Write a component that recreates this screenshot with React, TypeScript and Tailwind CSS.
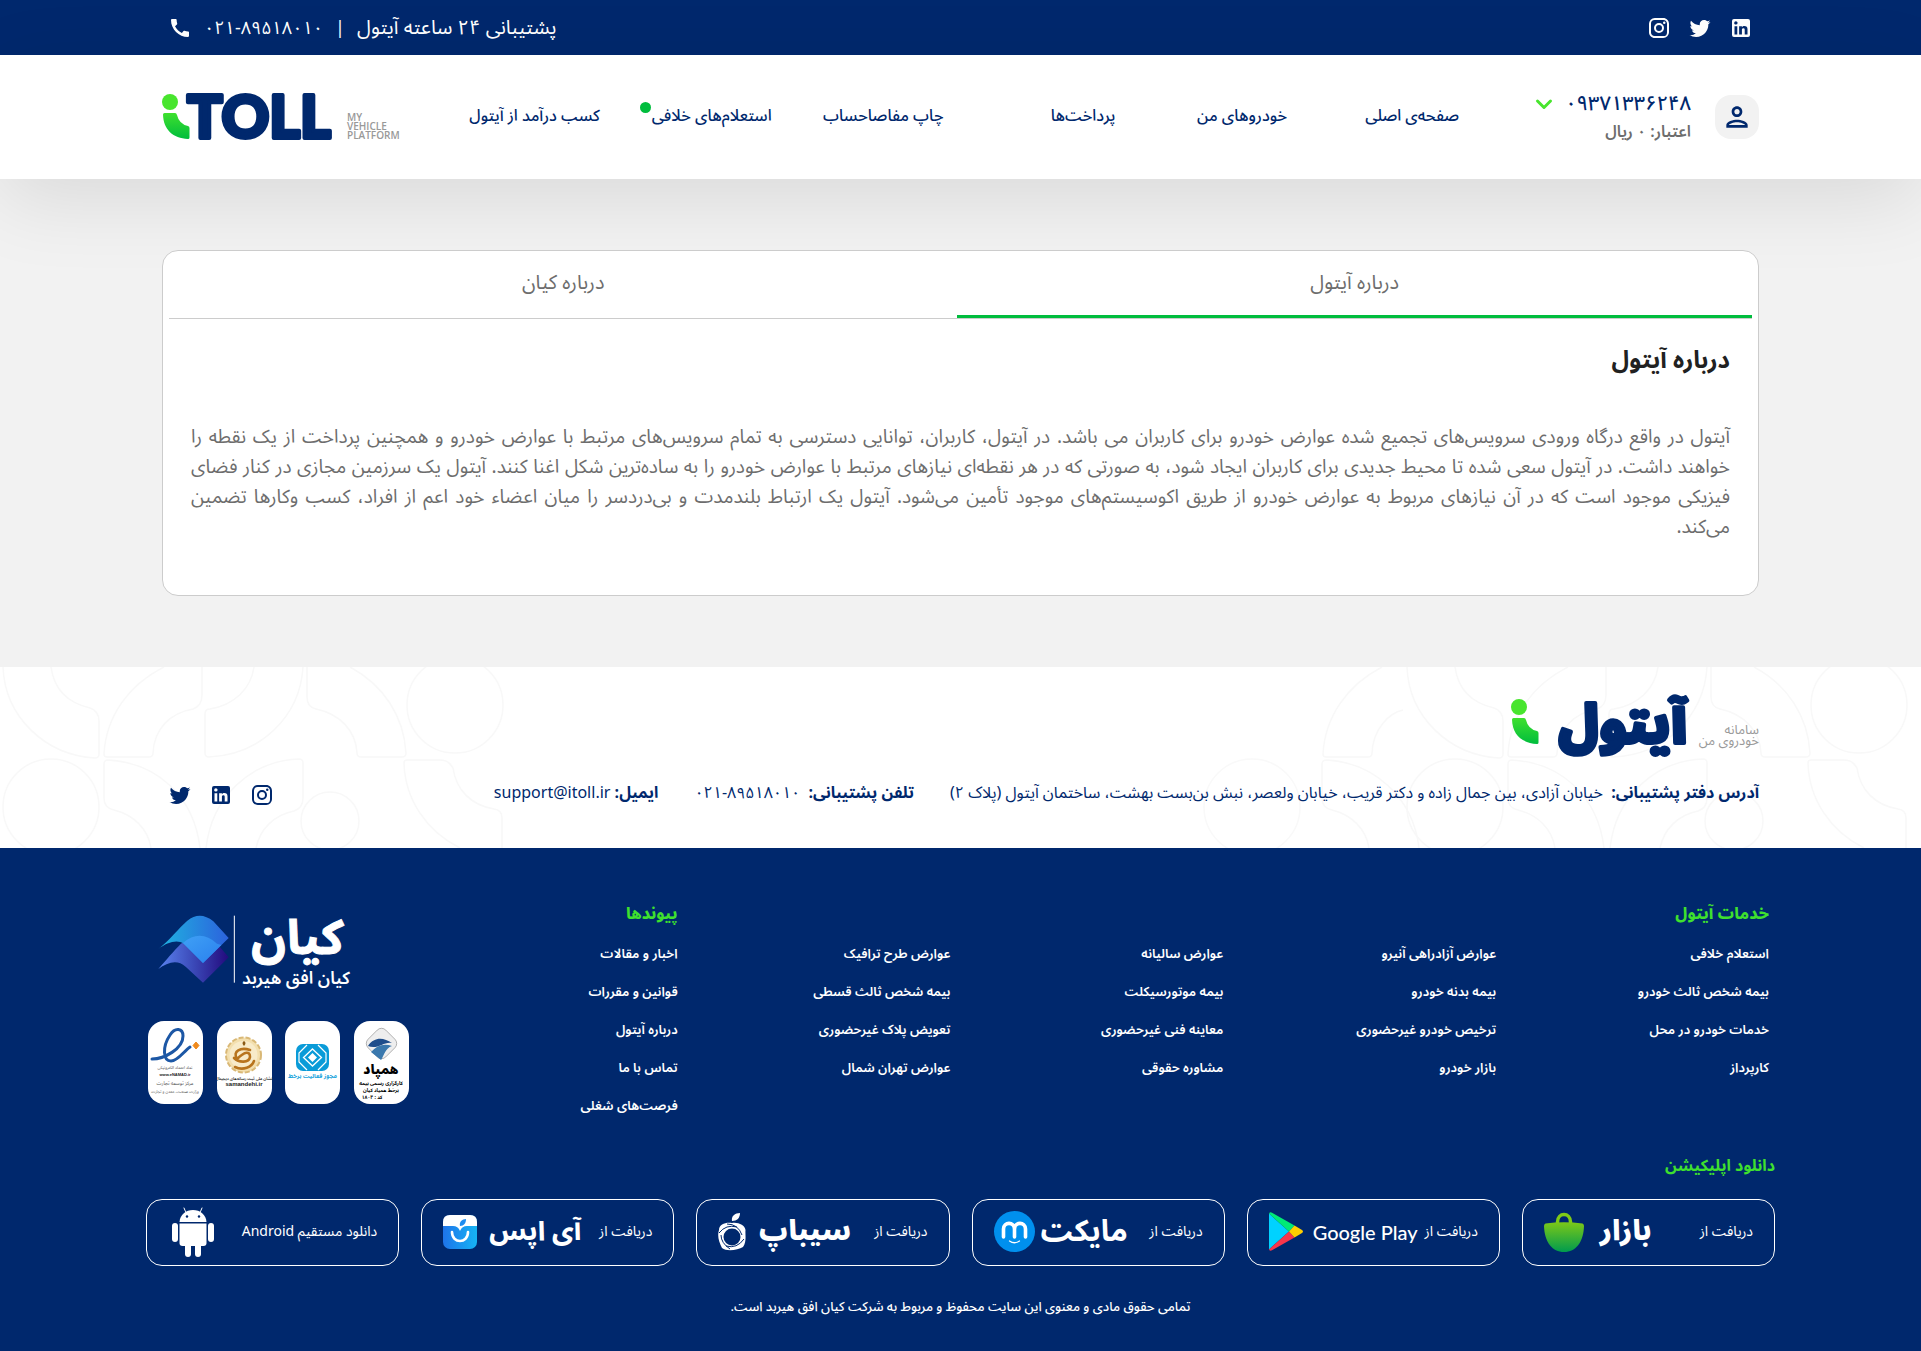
import { useState } from "react";
import type { ReactNode } from "react";
import { MdCall, MdOutlinePerson } from "react-icons/md";

type IconProps = { className?: string };

const Instagram = ({ className }: IconProps) => (
  <svg viewBox="0 0 24 24" fill="currentColor" className={className} aria-hidden="true">
    <path d="M7.8 2h8.4C19.4 2 22 4.6 22 7.8v8.4a5.8 5.8 0 0 1-5.8 5.8H7.8C4.6 22 2 19.4 2 16.2V7.8A5.8 5.8 0 0 1 7.8 2m-.2 2A3.6 3.6 0 0 0 4 7.6v8.8C4 18.39 5.61 20 7.6 20h8.8a3.6 3.6 0 0 0 3.6-3.6V7.6C20 5.61 18.39 4 16.4 4H7.6m9.65 1.5a1.25 1.25 0 0 1 1.25 1.25A1.25 1.25 0 0 1 17.25 8 1.25 1.25 0 0 1 16 6.75a1.25 1.25 0 0 1 1.25-1.25M12 7a5 5 0 0 1 5 5 5 5 0 0 1-5 5 5 5 0 0 1-5-5 5 5 0 0 1 5-5m0 2a3 3 0 0 0-3 3 3 3 0 0 0 3 3 3 3 0 0 0 3-3 3 3 0 0 0-3-3z" />
  </svg>
);

const Twitter = ({ className }: IconProps) => (
  <svg viewBox="0 0 24 24" fill="currentColor" className={className} aria-hidden="true">
    <path d="M22.46 6c-.77.35-1.6.58-2.46.69.88-.53 1.56-1.37 1.88-2.38-.83.5-1.75.85-2.72 1.05C18.37 4.5 17.26 4 16 4c-2.35 0-4.27 1.92-4.27 4.29 0 .34.04.67.11.98C8.28 9.09 5.11 7.38 3 4.79c-.37.63-.58 1.37-.58 2.15 0 1.49.75 2.81 1.91 3.56-.71 0-1.37-.2-1.95-.5v.03c0 2.08 1.48 3.82 3.44 4.21a4.22 4.22 0 0 1-1.93.07 4.28 4.28 0 0 0 4 2.98 8.521 8.521 0 0 1-5.33 1.84c-.34 0-.68-.02-1.02-.06C3.44 20.29 5.7 21 8.12 21 16 21 20.33 14.46 20.33 8.79c0-.19 0-.37-.01-.56.84-.6 1.56-1.36 2.14-2.23z" />
  </svg>
);

const LinkedIn = ({ className }: IconProps) => (
  <svg viewBox="0 0 24 24" fill="currentColor" className={className} aria-hidden="true">
    <path d="M19 3a2 2 0 0 1 2 2v14a2 2 0 0 1-2 2H5a2 2 0 0 1-2-2V5a2 2 0 0 1 2-2h14m-.5 15.5v-5.3a3.26 3.26 0 0 0-3.26-3.26c-.85 0-1.84.52-2.32 1.3v-1.11h-2.79v8.37h2.79v-4.93c0-.77.62-1.4 1.39-1.4a1.4 1.4 0 0 1 1.4 1.4v4.93h2.79M6.88 8.56a1.68 1.68 0 0 0 1.68-1.68c0-.93-.75-1.69-1.68-1.69a1.69 1.69 0 0 0-1.69 1.69c0 .93.76 1.68 1.69 1.68m1.39 9.94v-8.37H5.5v8.37h2.77z" />
  </svg>
);

const BrandMark = ({ id }: { id: string }) => (
  <>
    <defs>
      <linearGradient id={id} x1="0" y1="0" x2="0" y2="1">
        <stop offset="0" stopColor="#3fe02e" />
        <stop offset="1" stopColor="#00bd3d" />
      </linearGradient>
    </defs>
    <circle cx="8" cy="8" r="8" fill="#48e52e" />
    <path d="M2.500 19H13Q14.500 19 15 21Q17 30 26 32Q27.500 32.500 27.500 34V43.500Q27.500 45 26 45C11 44 1.500 36 1 20.500Q1 19 2.500 19Z" fill={`url(#${id})`} />
  </>
);

const HeaderLogo = () => (
  <a href="#home" aria-label="iTOLL" className="flex shrink-0 items-end" dir="ltr">
    <svg viewBox="0 0 173 46" className="h-[46px] w-[173px] overflow-visible" aria-hidden="true">
      <BrandMark id="mark-header" />
      <text x="25" y="44" fill="#00286d" stroke="#00286d" strokeWidth="4" strokeLinejoin="round" className="font-['Lato'] text-[59px] font-black">
        TOLL
      </text>
    </svg>
    <span className="ms-3 flex flex-col font-['Open_Sans'] text-[10px] leading-[9px] font-semibold text-[#999]">
      <span>MY</span>
      <span>VEHICLE</span>
      <span>PLATFORM</span>
    </span>
  </a>
);

const FooterLogo = () => (
  <a href="#home" aria-label="آیتول" className="flex w-fit items-end">
    <span className="mb-2 flex flex-col text-[13px] leading-[11px] text-[#999]">
      <span>سامانه</span>
      <span>خودروی من</span>
    </span>
    <svg viewBox="0 0 188 56" className="h-14 w-[188px] overflow-visible" aria-hidden="true">
      <BrandMark id="mark-footer" />
      <text x="112" y="44" textAnchor="middle" fill="#00286d" stroke="#00286d" strokeWidth="4" strokeLinejoin="round" className="text-[52px] font-black">
        آیتول
      </text>
    </svg>
  </a>
);

const Motif = () => (
  <g fill="none" stroke="#f8f8f8" strokeWidth="1.500">
    <path d="M3 0C5 50 45 88 95 91Q99 91 99 87V54Q99 44 90 41C68 36 54 22 51 0" />
    <path d="M164 0C128 18 106 50 104 87Q104 90 107 90H149Q153 90 153 86C154 62 170 46 193 42Q202 39 202 28V0" />
    <path d="M254 0C251 22 234 38 210 42Q205 42 205 47V86Q205 90 209 90C260 88 300 50 303 0" />
    <path d="M307 0V30Q307 40 316 42C340 47 356 64 357 86Q357 90 361 90H402Q406 90 406 86C404 50 384 18 350 0" />
    <circle cx="51" cy="140" r="48" />
    <path d="M200 181C194 130 158 96 108 93Q104 93 104 97V131Q104 141 114 143C134 148 148 162 151 181" />
    <path d="M206 181C212 130 250 94 299 92Q303 92 303 96V131Q303 141 294 144C274 148 260 162 256 181" />
    <circle cx="330" cy="154" r="29" />
    <path d="M460 181C426 164 405 132 404 96Q404 93 407 93H440Q449 93 453 101C456 122 470 138 494 142Q502 143 502 151V181" />
    <circle cx="455" cy="38" r="48" />
  </g>
);

const Backdrop = () => (
  <div className="pointer-events-none absolute inset-0 flex justify-between overflow-hidden" dir="ltr" aria-hidden="true">
    <svg viewBox="0 0 600 181" className="h-full w-[600px]">
      <Motif />
    </svg>
    <svg viewBox="1200 0 721 181" className="h-full w-[721px]">
      <g transform="translate(1404 0)">
        <Motif />
      </g>
      <path d="M1382 0C1347 18 1325 50 1323 87Q1323 90 1326 90H1368Q1372 90 1372 86C1373 62 1389 46 1403 43" fill="none" stroke="#f8f8f8" strokeWidth="1.500" />
      <circle cx="1252" cy="140" r="48" fill="none" stroke="#f9f9f9" strokeWidth="1.500" />
      <path d="M1369 181C1366 162 1352 148 1332 143Q1322 141 1322 131V97Q1322 93 1327 93C1374 96 1413 130 1419 181" fill="none" stroke="#f8f8f8" strokeWidth="1.500" />
    </svg>
  </div>
);

const KianLogo = () => (
  <svg viewBox="82 70 576 228" className="h-[76px] w-48 overflow-visible" role="img" aria-label="کیان افق هیربد">
    <defs>
      <linearGradient id="kian-a" x1="0" y1="0" x2="1" y2="0">
        <stop offset="0" stopColor="#1fb4e0" />
        <stop offset="1" stopColor="#2c62dd" />
      </linearGradient>
      <linearGradient id="kian-b" x1="0" y1="0" x2="1" y2="0">
        <stop offset="0" stopColor="#5b84f0" />
        <stop offset=".5" stopColor="#3b49b8" />
        <stop offset="1" stopColor="#230a7d" />
      </linearGradient>
      <linearGradient id="kian-c" x1="0" y1="0" x2="1" y2="1">
        <stop offset="0" stopColor="#3fa0f5" />
        <stop offset="1" stopColor="#2a80ee" />
      </linearGradient>
    </defs>
    <path d="M83 235C105 210 130 180 150 160Q208 110 260 160L294 200L217 276L165 228C140 205 110 215 83 235Z" fill="url(#kian-b)" />
    <path d="M83 175C115 150 145 112 170 90Q208 60 248 92L294 142L217 217L160 160C140 145 110 155 83 175Z" fill="url(#kian-a)" />
    <path d="M157 157Q208 113 259 159L272 163L217 217Z" fill="url(#kian-c)" />
    <path d="M311 75V276" stroke="#fff" strokeWidth="3" />
    <text x="500" y="190" textAnchor="middle" fill="#fff" stroke="#fff" strokeWidth="3" className="text-[144px] font-bold">
      کیان
    </text>
    <text x="496" y="280" textAnchor="middle" fill="#fff" className="text-[52px] font-semibold">
      کیان افق هیربد
    </text>
  </svg>
);

const badges: { label: string; art: ReactNode }[] = [
  {
    label: "همپاد",
    art: (
      <>
        <rect x="15" y="10" width="25" height="25" rx="6" transform="rotate(45 27.500 22.500)" fill="#eee" stroke="#999" strokeWidth=".7" />
        <path d="M14 25C21 15 30 17 38 22C30 20 24 29 14 25Z" fill="#1f4e8c" />
        <path d="M17 31C23 24 30 22 38 25C31 27 29 37 27 39Z" fill="#3a78ad" />
        <text x="27" y="53" textAnchor="middle" className="fill-black text-[13px] font-black">همپاد</text>
        <text x="27" y="64" textAnchor="middle" className="fill-black text-[5px] font-bold">کارگزاری رسمی بیمه</text>
        <text x="27" y="71" textAnchor="middle" className="fill-black text-[5px] font-bold">برخط همیاد کیان</text>
        <text x="18" y="78" textAnchor="middle" className="fill-black text-[5px] font-bold">کد : ۱۸۰۴</text>
      </>
    ),
  },
  {
    label: "مجوز فعالیت برخط",
    art: (
      <>
        <rect x="11" y="23" width="33" height="27" rx="7" fill="#0a9bd8" />
        <path d="M27.500 28L36.500 36.500L27.500 45L18.500 36.500Z" fill="#0a9bd8" stroke="#fff" strokeWidth="1.300" />
        <path d="M22 24L14 32V41L22 49M33 24L41 32V41L33 49" fill="none" stroke="#fff" strokeWidth="1.200" />
        <path d="M27.500 32L32 36.500L27.500 41L23 36.500Z" fill="#fff" />
        <text x="27.500" y="57" textAnchor="middle" className="fill-[#1ba4dc] text-[6px] font-bold">مجوز فعالیت برخط</text>
      </>
    ),
  },
  {
    label: "ساماندهی",
    art: (
      <>
        <circle cx="26.500" cy="34" r="17.500" fill="#f3dfae" stroke="#d9b876" strokeWidth="2" strokeDasharray="5 2" />
        <circle cx="26.500" cy="34" r="14" fill="#f8ebc9" />
        <path d="M27 20Q30 22 27 25Q24 22 27 20Z" fill="#8a5a14" />
        <path d="M20 38C15 30 24 26 33 29M20 38C28 30 33 30 33 36C32 42 22 42 17 37M18 46C26 50 35 46 37 40" fill="none" stroke="#b8741d" strokeWidth="2.600" strokeLinecap="round" />
        <text x="27" y="59" textAnchor="middle" className="fill-[#222] text-[4px] font-semibold">نشان ملی ثبت رسانه‌های دیجیتال</text>
        <text x="27" y="65" textAnchor="middle" className="fill-[#222] font-['Liberation_Sans'] text-[6px] font-bold">samandehi.ir</text>
      </>
    ),
  },
  {
    label: "نماد اعتماد الکترونیکی",
    art: (
      <>
        <path d="M4 38C16 38 35 28 35 15C35 7 27 6 22 14C14 26 15 40 23 40C30 40 36 30 42 26" fill="none" stroke="#1c57a5" strokeWidth="3" strokeLinecap="round" />
        <path d="M48 21L51 24.500L48 28L45 24.500Z" fill="#f08a1d" stroke="#f08a1d" />
        <text x="27" y="48" textAnchor="middle" className="fill-[#444] text-[4px]">نماد اعتماد الکترونیکی</text>
        <text x="27" y="55" textAnchor="middle" className="fill-[#222] font-['Liberation_Sans'] text-[4px] font-bold">www.eNAMAD.ir</text>
        <text x="27" y="64" textAnchor="middle" className="fill-[#555] text-[5px]">مرکز توسعه تجارت</text>
        <text x="27" y="72" textAnchor="middle" className="fill-[#555] text-[4px]">وزارت صنعت، معدن و تجارت</text>
      </>
    ),
  },
];

const navItems = ["صفحه‌ی اصلی", "خودروهای من", "پرداخت‌ها", "چاپ مفاصاحساب", "استعلام‌های خلافی", "کسب درآمد از آیتول"];

const serviceColumns = [
  ["استعلام خلافی", "بیمه شخص ثالث خودرو", "خدمات خودرو در محل", "کارپرداز"],
  ["عوارض آزادراهی آنیرو", "بیمه بدنه خودرو", "ترخیص خودرو غیرحضوری", "بازار خودرو"],
  ["عوارض سالیانه", "بیمه موتورسیکلت", "معاینه فنی غیرحضوری", "مشاوره حقوقی"],
  ["عوارض طرح ترافیک", "بیمه شخص ثالث قسطی", "تعویض پلاک غیرحضوری", "عوارض تهران شمال"],
];
const relatedLinks = ["اخبار و مقالات", "قوانین و مقررات", "درباره آیتول", "تماس با ما", "فرصت‌های شغلی"];

const LinkList = ({ title, items }: { title?: string; items: string[] }) => (
  <div className="pe-2">
    <h3 className="h-6 ps-1.5 text-base leading-6 font-extrabold text-[#3fe02e]">{title}</h3>
    <ul className="mt-[9px]">
      {items.map((item) => (
        <li key={item} className="ps-1.5 text-[13px] leading-[38px] font-semibold whitespace-nowrap">
          <a href="#services">{item}</a>
        </li>
      ))}
    </ul>
  </div>
);

const stores: { label: string; art: ReactNode }[] = [
  {
    label: "دریافت از",
    art: (
      <span className="flex items-center gap-4">
        <svg viewBox="0 0 40 40" className="size-10" aria-hidden="true">
          <defs>
            <linearGradient id="bag" x1="0" y1="0" x2="0" y2="1">
              <stop offset="0" stopColor="#7bc818" />
              <stop offset="1" stopColor="#009b4e" />
            </linearGradient>
          </defs>
          <path d="M13.500 13V10C13.500 0 26.500 0 26.500 10V13" fill="none" stroke="#7fcb16" strokeWidth="3.500" />
          <path d="M1.500 11.500Q20 9 38.500 11.500Q40 12 40 14C39.500 30 32 40 20 40C8 40 .5 30 0 14Q0 12 1.500 11.500Z" fill="url(#bag)" />
        </svg>
        <span className="text-[28px] leading-10 font-black">بازار</span>
      </span>
    ),
  },
  {
    label: "دریافت از",
    art: (
      <span className="flex items-center gap-2.5">
        <svg viewBox="0 0 34 39" className="h-[39px] w-[34px]" aria-hidden="true">
          <path d="M0 1.500V37.500L20 19.500Z" fill="#00d2ff" />
          <path d="M0 1.500Q1-.5 3 .7L25.500 13.500L20 19.500Z" fill="#00ea76" />
          <path d="M0 37.500Q1 39.500 3 38.300L25.500 25.500L20 19.500Z" fill="#f8364b" />
          <path d="M25.500 13.500L33 18Q35 19.500 33 21L25.500 25.500L20 19.500Z" fill="#ffcf00" />
        </svg>
        <span className="font-['Lato'] text-xl leading-7 font-medium">Google Play</span>
      </span>
    ),
  },
  {
    label: "دریافت از",
    art: (
      <span className="flex items-center gap-1.5">
        <svg viewBox="0 0 41 41" className="size-[41px]" aria-hidden="true">
          <circle cx="20.500" cy="20.500" r="20.500" fill="#0090ee" />
          <path d="M9.500 26V18C9.500 10.500 20.500 10.500 20.500 18V26M20.500 18C20.500 10.500 31.500 10.500 31.500 18V26" fill="none" stroke="#fff" strokeWidth="3.600" strokeLinecap="round" />
          <path d="M15.500 30Q20.500 33.500 25.500 30" fill="none" stroke="#fff" strokeWidth="1.300" strokeLinecap="round" />
        </svg>
        <span className="text-[30px] leading-10 font-bold">مایکت</span>
      </span>
    ),
  },
  {
    label: "دریافت از",
    art: (
      <span className="flex items-center gap-3">
        <svg viewBox="0 0 28 38" className="h-[38px] w-7" aria-hidden="true">
          <path d="M14 8C13 3 17 0 22 0C22 5 19 8 14 8Z" fill="#fff" />
          <path d="M14 10C20 9 27 12 27.500 17C27 22 29 28 25 34C20 37 9 39 4 35C1 29 -1 23 1 17C1 11 8 9 14 10Z" fill="#fff" />
          <circle cx="14" cy="24" r="8.500" fill="#00286d" />
          <path d="M9 11Q20 11 24 22M1 20Q8 11 19 14M3 22Q3 30 12 36M8 33Q19 36 26 26" fill="none" stroke="#00286d" strokeWidth="1" />
        </svg>
        <span className="text-[28px] leading-10 font-black">سیباپ</span>
      </span>
    ),
  },
  {
    label: "دریافت از",
    art: (
      <span className="flex items-center gap-3">
        <svg viewBox="0 0 34 34" className="size-[34px]" aria-hidden="true">
          <defs>
            <linearGradient id="apps" x1="0" y1="0" x2="1" y2="0">
              <stop offset="0" stopColor="#1e74ea" />
              <stop offset="1" stopColor="#16b4f4" />
            </linearGradient>
          </defs>
          <rect width="34" height="34" rx="7" fill="url(#apps)" />
          <path d="M7 0H27Q34 0 34 7V11H24Q19 11 17 16Q15 11 10 11H0V7Q0 0 7 0Z" fill="#fff" />
          <path d="M17 11C16 7 19 4 23 4C23 8 21 11 17 11Z" fill="#1e8df0" />
          <path d="M9 17C9 29 25 29 25 17" fill="none" stroke="#fff" strokeWidth="2.600" strokeLinecap="round" />
        </svg>
        <span className="text-[26px] leading-10 font-extrabold">آی اپس</span>
      </span>
    ),
  },
  {
    label: "دانلود مستقیم Android",
    art: (
      <svg viewBox="0 0 42 50" className="ms-1 h-[50px] w-[42px]" fill="#fff" aria-hidden="true">
        <path d="M7.500 15C8 7.500 14 3 21 3S34 7.500 34.500 15Z" />
        <path d="M13.500 4.500L12 1M28.500 4.500L30 1" stroke="#fff" strokeLinecap="round" />
        <circle cx="15" cy="9.500" r="1.200" fill="#00286d" />
        <circle cx="27" cy="9.500" r="1.200" fill="#00286d" />
        <path d="M7.500 16.500H34.500V36Q34.500 39 31.500 39H10.500Q7.500 39 7.500 36Z" />
        <rect x="0" y="16" width="6" height="19" rx="3" />
        <rect x="36" y="16" width="6" height="19" rx="3" />
        <rect x="13" y="34" width="6" height="16" rx="3" />
        <rect x="23" y="34" width="6" height="16" rx="3" />
      </svg>
    ),
  },
];

const tabs = [
  {
    title: "درباره آیتول",
    body: [
      "آیتول در واقع درگاه ورودی سرویس‌های تجمیع شده عوارض خودرو برای کاربران می باشد. در آیتول، کاربران، توانایی دسترسی به تمام سرویس‌های مرتبط با عوارض خودرو و همچنین پرداخت از یک نقطه را",
      "خواهند داشت. در آیتول سعی شده تا محیط جدیدی برای کاربران ایجاد شود، به صورتی که در هر نقطه‌ای نیازهای مرتبط با عوارض خودرو را به ساده‌ترین شکل اغنا کنند. آیتول یک سرزمین مجازی در کنار فضای",
      "فیزیکی موجود است که در آن نیازهای مربوط به عوارض خودرو از طریق اکوسیستم‌های موجود تأمین می‌شود. آیتول یک ارتباط بلندمدت و بی‌دردسر را میان اعضاء خود اعم از افراد، کسب وکارها تضمین",
      "می‌کند.",
    ],
  },
  { title: "درباره کیان", body: ["کیان افق هیربد"] },
];

export default function App() {
  const [active, setActive] = useState(0);

  return (
    <div dir="rtl" className="min-h-screen bg-[#f2f2f2] font-['Noto_Sans_Arabic','Noto_Sans','DejaVu_Sans_Condensed',sans-serif] text-[#00286d]">
      <div className="bg-[#00286d] text-white">
        <div className="mx-auto flex h-[55px] max-w-[1597px] items-center justify-between px-1.5">
          <div className="flex items-center gap-[17px]">
            <a href="#linkedin" aria-label="LinkedIn"><LinkedIn className="size-6" /></a>
            <a href="#twitter" aria-label="Twitter"><Twitter className="size-6" /></a>
            <a href="#instagram" aria-label="Instagram"><Instagram className="size-6" /></a>
          </div>
          <div className="flex items-center text-lg leading-6">
            <span className="text-xl leading-6">پشتیبانی ۲۴ ساعته آیتول</span>
            <span className="mx-3">|</span>
            <a href="tel:02189518010" dir="ltr">۰۲۱-۸۹۵۱۸۰۱۰</a>
            <MdCall className="ms-3 size-6" />
          </div>
        </div>
      </div>

      <header className="relative bg-white shadow-[0_20px_80px_rgba(0,0,0,0.1)]">
        <div className="mx-auto flex h-[124px] max-w-[1597px] items-center">
          <button type="button" aria-label="حساب کاربری" className="flex size-11 shrink-0 items-center justify-center rounded-2xl bg-[#f2f2f2]">
            <MdOutlinePerson className="size-8" />
          </button>
          <div className="ms-6 w-[232px] shrink-0 pt-0.5">
            <button type="button" className="flex items-center gap-3 text-xl leading-7 font-medium">
              <span>۰۹۳۷۱۳۳۶۲۴۸</span>
              <svg viewBox="0 0 18 12" className="h-3 w-[18px]" fill="none" stroke="#48e52e" strokeWidth="3" strokeLinecap="round" strokeLinejoin="round" aria-hidden="true">
                <path d="M2.500 3L9 9.500L15.500 3" />
              </svg>
            </button>
            <p className="text-base leading-7 font-semibold text-[#6d6d6d]">اعتبار: ۰ ریال</p>
          </div>
          <nav className="grid max-w-[1031px] flex-1 grid-cols-6 pb-0.5">
            {navItems.map((item, i) => (
              <a key={item} href="#nav" className="relative w-fit text-base leading-7 font-medium whitespace-nowrap">
                {item}
                {i === 4 && <span className="absolute -end-3 top-0 size-[11px] rounded-full bg-[#00bd3d]" />}
              </a>
            ))}
          </nav>
          <div className="ms-auto">
            <HeaderLogo />
          </div>
        </div>
      </header>

      <main className="px-4 py-[71px]">
        <section className="relative mx-auto max-w-[1597px] rounded-2xl border border-[#ccc] bg-white px-1.5 pb-[53px]">
          <div role="tablist" className="flex border-b border-[#ccc]">
            {tabs.map((tab, i) => (
              <button
                key={tab.title}
                type="button"
                role="tab"
                aria-selected={active === i}
                onClick={() => setActive(i)}
                className={`flex-auto border-b-[3px] pt-[18px] pb-[18px] text-xl leading-7 text-[#6d6d6d] ${active === i ? "border-[#00bd3d]" : "border-transparent"}`}
              >
                {tab.title}
              </button>
            ))}
          </div>
          <div role="tabpanel" className="px-[22px]">
            <h1 className="mt-6 text-2xl leading-9 font-bold text-[#212121]">{tabs[active].title}</h1>
            <p className="mt-[43px] text-justify text-[19px] leading-[30px] text-[#6d6d6d]">
              {tabs[active].body.map((line, i, lines) => (
                <span key={line} className={i < lines.length - 1 ? "block [text-align-last:justify]" : "block"}>
                  {line}
                </span>
              ))}
            </p>
          </div>
        </section>
      </main>

      <footer>
        <div className="relative bg-white">
          <Backdrop />
          <div className="relative mx-auto flex h-[181px] max-w-[1597px] flex-col pt-8">
            <FooterLogo />
            <div className="mt-6 flex items-center justify-between">
              <div className="flex items-center gap-9 text-base leading-7">
                <p><b className="me-1">آدرس دفتر پشتیبانی:</b> خیابان آزادی، بین جمال زاده و دکتر قریب، خیابان ولعصر، نبش بن‌بست بهشت، ساختمان آیتول (پلاک ۲)</p>
                <p><b className="me-1">تلفن پشتیبانی:</b> <a href="tel:02189518010"><bdi dir="ltr">۰۲۱-۸۹۵۱۸۰۱۰</bdi></a></p>
                <p><b>ایمیل:</b> <a href="mailto:support@itoll.ir">support@itoll.ir</a></p>
              </div>
              <div className="flex items-center gap-[17px] px-1.5 pt-1">
                <a href="#instagram" aria-label="Instagram"><Instagram className="size-6" /></a>
                <a href="#linkedin" aria-label="LinkedIn"><LinkedIn className="size-6" /></a>
                <a href="#twitter" aria-label="Twitter"><Twitter className="size-6" /></a>
              </div>
            </div>
          </div>
        </div>

        <div className="bg-[#00286d] pt-[54px] pb-[34px] text-white">
          <div className="mx-auto max-w-[1629px]">
            <div className="grid grid-cols-6 gap-2">
              {serviceColumns.map((items, i) => (
                <LinkList key={items[0]} title={i === 0 ? "خدمات آیتول" : undefined} items={items} />
              ))}
              <LinkList title="پیوندها" items={relatedLinks} />
              <div className="flex flex-col items-end pt-3">
                <div className="me-3"><KianLogo /></div>
                <ul className="mt-[31px] flex w-full justify-between px-0.5">
                  {badges.map((badge) => (
                    <li key={badge.label}>
                      <a href="#licence" aria-label={badge.label}>
                        <svg viewBox="0 0 55 83" className="h-[83px] w-[55px] rounded-2xl bg-white" aria-hidden="true">
                          {badge.art}
                        </svg>
                      </a>
                    </li>
                  ))}
                </ul>
              </div>
            </div>

            <h3 className="mt-[29px] text-base leading-6 font-bold text-[#3fe02e]">دانلود اپلیکیشن</h3>
            <div className="mt-[21px] grid grid-cols-6 gap-[22px]">
              {stores.map((store, i) => (
                <a key={i} href="#download" className="flex h-[67px] items-center justify-between rounded-2xl border border-white px-[21px] pb-0.5 whitespace-nowrap">
                  <span className="text-sm leading-6">{store.label}</span>
                  <span className="flex" dir="ltr">{store.art}</span>
                </a>
              ))}
            </div>
            <p className="mt-[31px] text-center text-[13px] leading-5 font-medium">تمامی حقوق مادی و معنوی این سایت محفوظ و مربوط به شرکت کیان افق هیربد است.</p>
          </div>
        </div>
      </footer>
    </div>
  );
}
